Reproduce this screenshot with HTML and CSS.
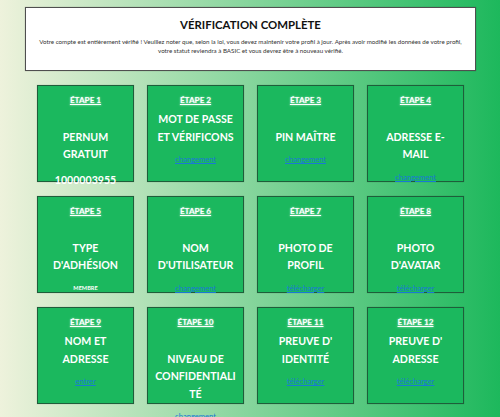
FILE: index.html
```html
<!DOCTYPE html>
<html lang="fr">
<head>
<meta charset="utf-8">
<title>Vérification complète</title>
<link rel="stylesheet" href="styles.css">
</head>
<body>
<main class="page">
  <section class="notice">
    <h1 class="notice-title">VÉRIFICATION COMPLÈTE</h1>
    <p class="notice-text">Votre compte est entièrement vérifié ! Veuillez noter que, selon la loi, vous devez maintenir votre profil à jour. Après avoir modifié les données de votre profil, votre statut reviendra à BASIC et vous devrez être à nouveau vérifié.</p>
  </section>
  <section class="steps">
    <div class="step">
      <div class="step-label">ÉTAPE 1</div>
      <div class="step-title spaced">PERNUM GRATUIT</div>
      <div class="step-value">1000003955</div>
    </div>
    <div class="step">
      <div class="step-label">ÉTAPE 2</div>
      <div class="step-title">MOT DE PASSE ET VÉRIFICONS</div>
      <a class="step-link" href="#">changement</a>
    </div>
    <div class="step">
      <div class="step-label">ÉTAPE 3</div>
      <div class="step-title spaced">PIN MAÎTRE</div>
      <a class="step-link" href="#">changement</a>
    </div>
    <div class="step">
      <div class="step-label">ÉTAPE 4</div>
      <div class="step-title spaced">ADRESSE E-MAIL</div>
      <a class="step-link" href="#">changement</a>
    </div>
    <div class="step">
      <div class="step-label">ÉTAPE 5</div>
      <div class="step-title spaced">TYPE D'ADHÉSION</div>
      <div class="step-note">MEMBRE</div>
    </div>
    <div class="step">
      <div class="step-label">ÉTAPE 6</div>
      <div class="step-title spaced">NOM D'UTILISATEUR</div>
      <a class="step-link" href="#">changement</a>
    </div>
    <div class="step">
      <div class="step-label">ÉTAPE 7</div>
      <div class="step-title spaced">PHOTO DE PROFIL</div>
      <a class="step-link" href="#">télécharger</a>
    </div>
    <div class="step">
      <div class="step-label">ÉTAPE 8</div>
      <div class="step-title spaced">PHOTO D'AVATAR</div>
      <a class="step-link" href="#">télécharger</a>
    </div>
    <div class="step">
      <div class="step-label">ÉTAPE 9</div>
      <div class="step-title">NOM ET ADRESSE</div>
      <a class="step-link" href="#">entrer</a>
    </div>
    <div class="step">
      <div class="step-label">ÉTAPE 10</div>
      <div class="step-title spaced break">NIVEAU DE CONFIDENTIALITÉ</div>
      <a class="step-link" href="#">changement</a>
    </div>
    <div class="step">
      <div class="step-label">ÉTAPE 11</div>
      <div class="step-title">PREUVE D' IDENTITÉ</div>
      <a class="step-link" href="#">télécharger</a>
    </div>
    <div class="step">
      <div class="step-label">ÉTAPE 12</div>
      <div class="step-title">PREUVE D' ADRESSE</div>
      <a class="step-link" href="#">télécharger</a>
    </div>
  </section>
</main>
</body>
</html>
```

FILE: styles.css
```css
html, body {
  margin: 0;
  padding: 0;
}

body {
  width: 500px;
  min-height: 417px;
  overflow: hidden;
  background: linear-gradient(to right, #eef2dc 0%, #1db85c 100%);
  font-family: Lato, "Open Sans", sans-serif;
}

.page {
  padding-top: 7px;
}

.notice {
  box-sizing: border-box;
  width: 451px;
  height: 64px;
  margin: 0 0 0 25px;
  background: #ffffff;
  border: 1px solid #4f4f4f;
  box-shadow: 0 0 1px rgba(0, 0, 0, 0.3);
  text-align: center;
  padding-top: 8px;
}

.notice-title {
  margin: 0;
  font-size: 11.4px;
  line-height: 17px;
  font-weight: 700;
  color: #111111;
}

.notice-text {
  margin: 4px 8px 0;
  font-size: 6.2px;
  line-height: 9px;
  color: #333333;
}

.steps {
  display: grid;
  grid-template-columns: repeat(4, 97px);
  grid-auto-rows: 97px;
  column-gap: 13px;
  row-gap: 14px;
  margin: 14px 0 0 37px;
}

.step {
  box-sizing: border-box;
  background: #1bb85e;
  border: 1px solid #1e5e3a;
  box-shadow: 0 0 1px rgba(0, 0, 0, 0.25);
  text-align: center;
  color: #ffffff;
  padding: 8px 7px 0;
  overflow: visible;
}

.step-label {
  font-size: 8.2px;
  line-height: 12px;
  font-weight: 700;
  text-decoration: underline;
  text-shadow: 0 0 2px rgba(255, 255, 255, 0.7);
}

.step-title {
  margin-top: 5px;
  font-size: 10.6px;
  line-height: 17.6px;
  font-weight: 700;
}

.step-title.spaced {
  margin-top: 22.6px;
}

.step-title.break {
  overflow-wrap: anywhere;
}

.step-link {
  display: block;
  margin-top: 8px;
  font-size: 7.6px;
  line-height: 10px;
  color: #1a78d6;
  text-decoration: underline;
}

.step-value {
  margin-top: 7px;
  font-size: 10.6px;
  line-height: 18px;
  font-weight: 700;
}

.step-note {
  margin-top: 9px;
  font-size: 5.6px;
  line-height: 8px;
  font-weight: 700;
}
```
